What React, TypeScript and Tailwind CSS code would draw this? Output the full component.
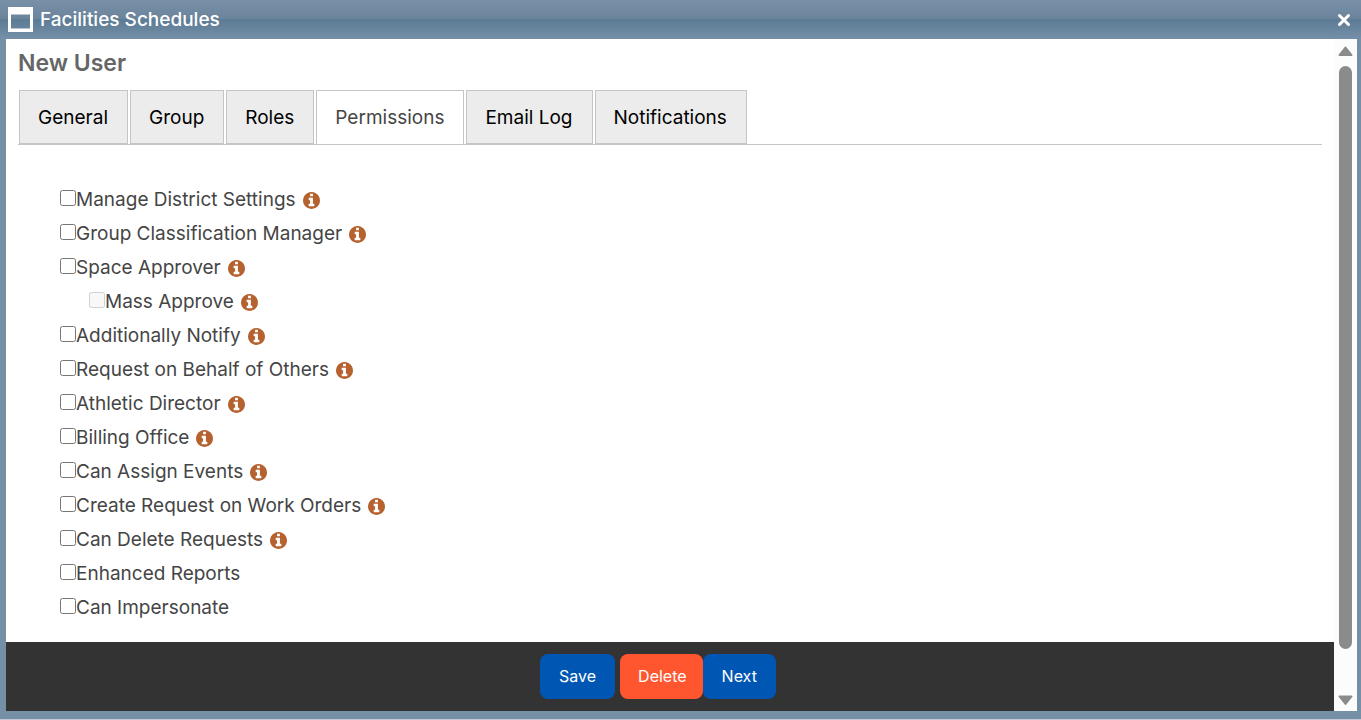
import React, { useState } from 'react';

const tabs = ['General', 'Group', 'Roles', 'Permissions', 'Email Log', 'Notifications'];

type Permission = {
  id: string;
  label: string;
  info?: boolean;
  child?: boolean;
};

const permissions: Permission[] = [
  { id: 'district-settings', label: 'Manage District Settings', info: true },
  { id: 'classification', label: 'Group Classification Manager', info: true },
  { id: 'space-approver', label: 'Space Approver', info: true },
  { id: 'mass-approve', label: 'Mass Approve', info: true, child: true },
  { id: 'notify', label: 'Additionally Notify', info: true },
  { id: 'behalf', label: 'Request on Behalf of Others', info: true },
  { id: 'athletic', label: 'Athletic Director', info: true },
  { id: 'billing', label: 'Billing Office', info: true },
  { id: 'assign', label: 'Can Assign Events', info: true },
  { id: 'work-orders', label: 'Create Request on Work Orders', info: true },
  { id: 'delete', label: 'Can Delete Requests', info: true },
  { id: 'reports', label: 'Enhanced Reports' },
  { id: 'impersonate', label: 'Can Impersonate' },
];

function InfoIcon() {
  return (
    <svg className="ml-[7px] size-[17px] text-[#b5622f]" viewBox="128 128 1536 1536" fill="currentColor" aria-hidden="true">
      <path d="M1152 1376v-160q0-14-9-23t-23-9h-96v-512q0-14-9-23t-23-9h-320q-14 0-23 9t-9 23v160q0 14 9 23t23 9h96v320h-96q-14 0-23 9t-9 23v160q0 14 9 23t23 9h448q14 0 23-9t9-23zm-128-896v-160q0-14-9-23t-23-9h-192q-14 0-23 9t-9 23v160q0 14 9 23t23 9h192q14 0 23-9t9-23zm640 416q0 209-103 385.500t-279.500 279.500-385.500 103-385.500-103-279.500-279.500-103-385.500 103-385.500 279.500-279.500 385.500-103 385.500 103 279.500 279.500 103 385.500z" />
    </svg>
  );
}

function TitleBar() {
  return (
    <header className="flex h-[39px] items-center justify-between bg-[linear-gradient(#7890a8_0%,#6b839b_48%,#5b7b94_49%,#768fa8_100%)] pl-2 pr-[10px] text-white">
      <div className="flex items-center gap-[7px]">
        <svg width="25" height="25" viewBox="0 0 25 25" aria-hidden="true">
          <path d="M0 0h25v25H0zM3 7.500v14h19v-14z" fill="currentColor" fillRule="evenodd" />
        </svg>
        <h1 className="text-[19px] leading-6 font-medium">Facilities Schedules</h1>
      </div>
      <button type="button" aria-label="Close" className="p-0">
        <svg width="14" height="14" viewBox="0 0 14 14" aria-hidden="true">
          <path d="M2.500 2.500l9 9M11.500 2.500l-9 9" stroke="currentColor" strokeWidth="3" strokeLinecap="round" />
        </svg>
      </button>
    </header>
  );
}

function Tabs({ active, onSelect }: { active: string; onSelect: (tab: string) => void }) {
  return (
    <div role="tablist" className="flex gap-[2px] border-b border-[#c5c5c5] pl-px">
      {tabs.map((tab) => (
        <button
          key={tab}
          type="button"
          role="tab"
          aria-selected={tab === active}
          onClick={() => onSelect(tab)}
          className={
            tab === active
              ? 'h-[54px] border border-b-0 border-[#c5c5c5] bg-white pt-px pr-[19px] pl-[18px] text-[19px] text-[#454545]'
              : 'h-[54px] border border-[#c5c5c5] bg-[#ececec] pt-[2px] pr-[19px] pl-[18px] text-[19px] text-black'
          }
        >
          {tab}
        </button>
      ))}
    </div>
  );
}

function PermissionRow({ item, disabled, onChange }: { item: Permission; disabled: boolean; onChange: (id: string, on: boolean) => void }) {
  return (
    <li className={item.child ? 'flex h-[34px] items-center pl-[29px]' : 'flex h-[34px] items-center'}>
      <input
        id={item.id}
        type="checkbox"
        disabled={disabled}
        onChange={(e) => onChange(item.id, e.target.checked)}
        className="mb-1 size-4"
      />
      <label htmlFor={item.id}>{item.label}</label>
      {item.info && <InfoIcon />}
    </li>
  );
}

function ScrollRail() {
  return (
    <div className="flex w-[23px] flex-col items-center gap-2 bg-[#fcfcfc] pt-[6px] pb-1 text-[#8b8b8b]" aria-hidden="true">
      <svg width="15" height="13" viewBox="0 0 15 13">
        <path d="M7.500 2.500L13.500 10H1.500z" fill="currentColor" stroke="currentColor" strokeWidth="2" strokeLinejoin="round" />
      </svg>
      <div className="flex w-[13px] flex-1 flex-col">
        <div className="grow-[94] rounded-full bg-[#8b8b8b]" />
        <div className="grow-[6]" />
      </div>
      <svg width="15" height="13" viewBox="0 0 15 13">
        <path d="M7.500 10L13.500 2.500H1.500z" fill="currentColor" stroke="currentColor" strokeWidth="2" strokeLinejoin="round" />
      </svg>
    </div>
  );
}

export default function App() {
  const [activeTab, setActiveTab] = useState('Permissions');
  const [approver, setApprover] = useState(false);

  const handleChange = (id: string, on: boolean) => {
    if (id === 'space-approver') setApprover(on);
  };

  return (
    <div className="flex min-h-screen flex-col border-b border-[#c3c8d4] bg-[#748fa6] font-['Inter',sans-serif]">
      <TitleBar />
      <div className="mr-1 mb-2 ml-[6px] flex flex-1 bg-white">
        <main className="flex min-w-0 flex-1 flex-col">
          <div className="flex-1 px-3">
            <h2 className="pt-2 pb-[11px] text-[23px] leading-8 font-semibold text-[#666]">New User</h2>
            <Tabs active={activeTab} onSelect={setActiveTab} />
            <ul className="pt-[38px] pb-4 pl-[42px] text-[19px] text-[#454545]">
              {permissions.map((item) => (
                <PermissionRow key={item.id} item={item} disabled={!!item.child && !approver} onChange={handleChange} />
              ))}
            </ul>
          </div>
          <footer className="flex justify-center bg-[#333] py-3 pr-6 text-base text-white">
            <button type="button" className="mr-[5px] h-[45px] rounded-lg bg-[#0056b3] px-[19px] pb-[2px]">Save</button>
            <button type="button" className="h-[45px] rounded-lg bg-[#ff5630] pr-4 pb-[2px] pl-[18px]">Delete</button>
            <button type="button" className="h-[45px] rounded-lg bg-[#0056b3] px-[19px] pb-[2px]">Next</button>
          </footer>
        </main>
        <ScrollRail />
      </div>
    </div>
  );
}
